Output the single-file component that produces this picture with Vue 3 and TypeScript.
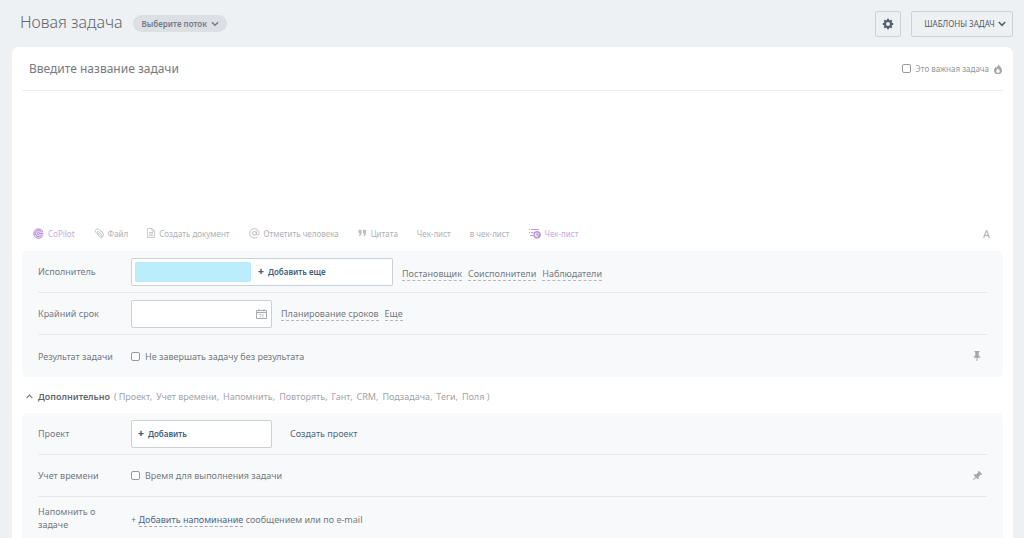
<script setup lang="ts">
import { ref } from 'vue'

const title = ref('')
const description = ref('')
const deadline = ref('')
const important = ref(false)
const requireResult = ref(false)
const trackTime = ref(false)

const roles: string[] = ['Постановщик', 'Соисполнители', 'Наблюдатели']
const extras: string[] = ['Проект,', 'Учет времени,', 'Напомнить,', 'Повторять,', 'Гант,', 'CRM,', 'Подзадача,', 'Теги,', 'Поля )']
</script>

<template>
  <div class="page">
    <header class="header">
      <h1>Новая задача</h1>
      <button class="flow" type="button">
        Выберите поток
        <svg width="8" height="6" viewBox="0 0 9 6"><path d="M1 1l3.5 3.5L8 1" fill="none" stroke="currentColor" stroke-width="1.6" /></svg>
      </button>
      <button class="outlined gear" type="button" aria-label="Настройки">
        <svg width="12" height="12" viewBox="0 0 12 12">
          <circle cx="6" cy="6" r="3" fill="none" stroke="#525c69" stroke-width="2" />
          <path d="M6 .8v1.8M6 9.400v1.800M.8 6h1.800M9.400 6h1.800M2.300 2.300l1.300 1.300M8.400 8.400l1.300 1.300M2.300 9.700l1.300-1.300M8.400 3.600l1.300-1.300" stroke="#525c69" stroke-width="2" />
        </svg>
      </button>
      <button class="outlined templates" type="button">
        ШАБЛОНЫ ЗАДАЧ
        <svg width="8" height="6" viewBox="0 0 8 6"><path d="M.8 1L4 4.300 7.200 1" fill="none" stroke="currentColor" stroke-width="1.500" /></svg>
      </button>
    </header>

    <main class="card">
      <div class="title-row">
        <input v-model="title" class="title-input" type="text" placeholder="Введите название задачи" aria-label="Название задачи">
        <label class="important">
          <input v-model="important" type="checkbox">
          Это важная задача
          <svg width="8" height="10" viewBox="0 0 8 10"><path fill-rule="evenodd" d="M4.200 0C4.600 2 8 3.300 8 6.400A4 3.600 0 0 1 0 6.400C0 4.700 1 3.700 2 2.800c.1.500.4.800.700.900C3.300 2.700 4.200 1.500 4.200 0zM4 4.400C2.900 5.300 2.300 6 2.300 7.200c0 1 .7 1.700 1.700 1.700s1.700-.7 1.700-1.700C5.700 6 5.100 5.300 4 4.400z" fill="#a3a6aa" /></svg>
        </label>
      </div>
      <textarea v-model="description" class="description" aria-label="Описание задачи"></textarea>

      <div class="toolbar">
        <button class="tool violet" type="button">
          <svg width="11" height="11" viewBox="0 0 11 11"><circle cx="5.500" cy="5.500" r="5" fill="#e6d5f2" /><g fill="none" stroke="#b98fd8"><path d="M9.900 4A4.700 4.700 0 1 0 9.800 7.500" /><path d="M8 3.800A3 3 0 1 0 8.300 6.800M6.500 5.500h3.700" /><circle cx="5.500" cy="5.500" r="1" /></g></svg>
          CoPilot
        </button>
        <button class="tool" type="button">
          <svg width="10" height="11" viewBox="0 0 10 11"><path d="M8.600 5.100L5.300 1.500C3.300-.3.200 2.200 1.900 4.400l3.900 4.300c1.300 1.300 3.100-.1 2-1.500L4.700 3.700c-.8-.7-1.800.1-1.200.9l2.700 3M6.500 2.300l2.300 2.500c1.400 1.800.5 4.600-1.600 5" fill="none" stroke="#b9bcc0" stroke-width=".9" /></svg>
          Файл
        </button>
        <button class="tool" type="button">
          <svg width="8" height="10" viewBox="0 0 8 10"><path d="M.5.5H5L7.500 3v6.500h-7zM5 .5V3h2.500M2 4.500h4M2 6h4M2 7.500h4" fill="none" stroke="#babdc1" stroke-width=".8" /></svg>
          Создать документ
        </button>
        <button class="tool" type="button">
          <svg width="11" height="11" viewBox="0 0 11 11"><circle cx="5.400" cy="5.400" r="2" fill="none" stroke="#b2b5b9" stroke-width=".9" /><path d="M7.400 3.300v2.800c0 1.800 2.700 1.500 2.700-.9A4.700 4.700 0 1 0 8.100 9.200" fill="none" stroke="#b2b5b9" stroke-width=".9" /></svg>
          Отметить человека
        </button>
        <button class="tool" type="button">
          <svg width="9" height="8" viewBox="0 0 9 8"><path d="M.5.800h3v3.400C3.500 6 2.500 7 1 7.300V6c.7-.3 1-.8 1-1.500H.5zM5 .800h3v3.400C8 6 7 7 5.500 7.300V6c.7-.3 1-.8 1-1.500H5z" fill="#bdbfc2" /></svg>
          Цитата
        </button>
        <button class="tool" type="button">Чек-лист</button>
        <button class="tool" type="button">в чек-лист</button>
        <button class="tool violet" type="button">
          <svg width="12" height="11" viewBox="0 0 12 11"><path d="M0 1.500h1M2 1.500h8M0 4.500h1M2 4.500h2.500M1 7.500h3" stroke="#c19be0" /><circle cx="8" cy="6.800" r="3" fill="#f3eaf9" stroke="#bd92dd" stroke-width="1.400" /><path d="M8 6.800V5.200M7.600 6.800H11c0 1.300-.8 2-2 2" fill="none" stroke="#bd92dd" stroke-width="1.300" /></svg>
          Чек-лист
        </button>
        <button class="tool format" type="button">A</button>
      </div>

      <section class="panel">
        <div class="row">
          <span class="name">Исполнитель</span>
          <div class="field wide">
            <span class="person"></span>
            <button class="add" type="button"><b>+</b>Добавить еще</button>
          </div>
          <div class="links low">
            <a v-for="role in roles" :key="role" href="#">{{ role }}</a>
          </div>
        </div>
        <div class="row">
          <label class="name" for="deadline">Крайний срок</label>
          <div class="field">
            <input id="deadline" v-model="deadline" class="date" type="text">
            <svg width="11" height="10" viewBox="0 0 11 10"><path d="M.5 1.500h10v8H.5zM.5 3.500h10M3 0v2.500M8 0v2.500" fill="none" stroke="#a8abb0" /><path d="M3 5.500h2v1.200L4 8.500M7 5v3.500" fill="none" stroke="#b4b7bb" stroke-width=".8" /></svg>
          </div>
          <div class="links">
            <a href="#">Планирование сроков</a>
            <a href="#">Еще</a>
          </div>
        </div>
        <div class="row">
          <span class="name">Результат задачи</span>
          <label class="check"><input v-model="requireResult" type="checkbox">Не завершать задачу без результата</label>
          <button class="pin" type="button" aria-label="Открепить"><svg width="10" height="10" viewBox="0 0 10 10"><path d="M2.500 0h5v1.200h-.8v3L8.200 6v.8H5.500V10h-1V6.800H1.800V6l1.500-1.800v-3h-.8z" fill="#a5a9ae" /></svg></button>
        </div>
      </section>

      <div class="more">
        <button class="toggle" type="button">
          <svg width="7" height="5" viewBox="0 0 7 5"><path d="M.6 4.200L3.500 1.200l2.900 3" fill="none" stroke="#777c82" stroke-width="1.200" /></svg>
          Дополнительно
        </button>
        <div class="extras">
          <span>(</span>
          <a v-for="extra in extras" :key="extra" href="#">{{ extra }}</a>
        </div>
      </div>

      <section class="panel last">
        <div class="row">
          <span class="name">Проект</span>
          <div class="field">
            <button class="add" type="button"><b>+</b>Добавить</button>
          </div>
          <a class="create" href="#">Создать проект</a>
        </div>
        <div class="row">
          <span class="name">Учет времени</span>
          <label class="check"><input v-model="trackTime" type="checkbox">Время для выполнения задачи</label>
          <button class="pin" type="button" aria-label="Закрепить"><svg width="10" height="10" viewBox="0 0 10 10"><path transform="rotate(45 5 5)" d="M2.500 0h5v1.200h-.8v3L8.200 6v.8H5.500V10h-1V6.800H1.800V6l1.500-1.800v-3h-.8z" fill="#a5a9ae" /></svg></button>
        </div>
        <div class="row">
          <span class="name">Напомнить о задаче</span>
          <p class="reminder">+ <a href="#">Добавить напоминание</a> сообщением или по e-mail</p>
        </div>
      </section>
    </main>
  </div>
</template>

<style>
body {
  margin: 0;
  background: #edf1f4;
}
</style>

<style scoped>
.page {
  box-sizing: border-box;
  min-height: 100vh;
  padding: 0 11px 0 12px;
  display: flex;
  flex-direction: column;
  font-family: "Noto Sans", "Open Sans", sans-serif;
  font-size: 9px;
  line-height: 13px;
  color: #74797f;
}
button, input, textarea {
  font: inherit;
  color: inherit;
  padding: 0;
  margin: 0;
  border: 0;
  background: none;
  outline: none;
}
button {
  display: flex;
  align-items: center;
  white-space: nowrap;
  cursor: pointer;
}
svg {
  display: block;
  flex: none;
}
a {
  color: inherit;
  text-decoration: none;
}
.header {
  height: 47px;
  padding-left: 8px;
  display: flex;
  align-items: center;
}
h1 {
  margin: 0 10px 3px 0;
  font-size: 16px;
  line-height: 22px;
  font-weight: 300;
  color: #62676d;
}
.flow {
  height: 17px;
  padding: 0 8px 0 9px;
  gap: 4px;
  border-radius: 9px;
  background: #dcdfe4;
  font-size: 8px;
  font-weight: 600;
  color: #747b88;
}
.outlined {
  box-sizing: border-box;
  height: 26px;
  justify-content: center;
  border: 1px solid #cdd2d7;
  border-radius: 2px;
  color: #545c68;
}
.gear {
  width: 26px;
  margin-left: auto;
}
.templates {
  width: 102px;
  margin-left: 10px;
  padding-left: 6px;
  gap: 3px;
  font-size: 8px;
}
.card {
  flex: 1;
  padding: 0 10px;
  display: flex;
  flex-direction: column;
  border-radius: 7px 7px 0 0;
  background: #fff;
}
.title-row {
  height: 43px;
  padding: 0 1px 0 7px;
  display: flex;
  align-items: center;
  border-bottom: 1px solid #eceef0;
}
.title-input {
  flex: 1;
  min-width: 0;
  height: 30px;
  font-size: 12px;
}
.title-input::placeholder {
  color: #777a7e;
  opacity: 1;
}
.important {
  display: flex;
  align-items: center;
  gap: 5px;
  font-size: 8px;
  color: #94989d;
}
input[type="checkbox"] {
  appearance: none;
  box-sizing: border-box;
  width: 9px;
  height: 9px;
  border: 1px solid #96999e;
  border-radius: 2px;
  background: #fff;
}
input[type="checkbox"]:checked {
  background: #2b7ab5;
}
.description {
  height: 126px;
  resize: none;
}
.toolbar {
  height: 34px;
  padding: 0 13px 2px 11px;
  box-sizing: border-box;
  display: flex;
  align-items: center;
  gap: 19px;
  font-size: 8px;
  color: #aeb1b5;
}
.tool {
  gap: 4px;
}
.violet {
  color: #c8a9e3;
}
.format {
  margin-left: auto;
  font-size: 11px;
}
.panel {
  padding: 0 16px;
  border-radius: 5px;
  background: #f7f9fb;
}
.last {
  flex: 1;
  border-radius: 5px 5px 0 0;
}
.row {
  box-sizing: border-box;
  height: 42px;
  display: flex;
  align-items: center;
  border-bottom: 1px solid #e6e9ec;
}
.row:last-child {
  border-bottom: 0;
}
.name {
  width: 78px;
  margin-right: 15px;
  flex: none;
}
.field {
  box-sizing: border-box;
  width: 141px;
  height: 28px;
  padding: 0 4px 0 3px;
  display: flex;
  align-items: center;
  border: 1px solid #ccd1d6;
  border-radius: 2px;
  background: #fff;
}
.wide {
  width: 262px;
}
.person {
  width: 116px;
  height: 20px;
  margin-right: 4px;
  border-radius: 1px;
  background: #bbedfc;
}
.add {
  padding: 0 3px;
  gap: 4px;
  font-size: 8px;
  font-weight: 600;
  color: #3f5f7c;
}
.add b {
  font-size: 10px;
}
.date {
  flex: 1;
  min-width: 0;
  height: 24px;
}
.links {
  display: flex;
  gap: 6px;
  margin-left: 9px;
}
.links a {
  border-bottom: 1px dashed #b5b9be;
}
.low {
  padding-top: 4px;
}
.check {
  display: flex;
  align-items: center;
  gap: 5px;
}
.pin {
  margin-left: auto;
  margin-right: 5px;
}
.more {
  height: 36px;
  padding: 2px 0 0 4px;
  box-sizing: border-box;
  display: flex;
  align-items: center;
}
.toggle {
  gap: 5px;
  font-weight: 600;
  color: #62676d;
}
.extras {
  display: flex;
  margin-left: 4px;
  gap: 4px;
  color: #a0a4a9;
}
.extras span {
  margin-right: -2px;
}
.create {
  margin-left: 18px;
  color: #4c6884;
}
.reminder {
  margin: 0;
  padding-top: 2px;
}
.reminder a {
  border-bottom: 1px dashed #9aaabd;
  color: #4c6884;
}
</style>
